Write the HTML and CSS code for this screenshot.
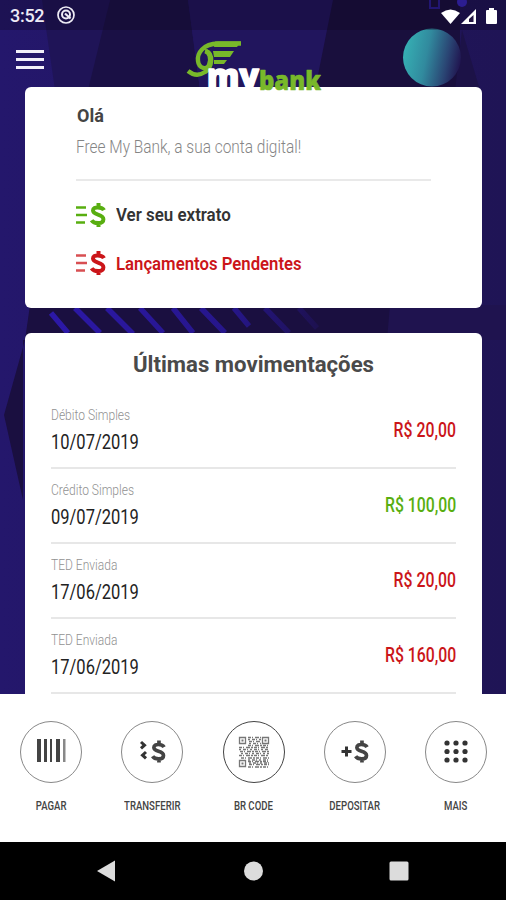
FILE: index.html
```html
<!DOCTYPE html>
<html lang="pt-BR">
<head>
<meta charset="utf-8">
<title>MyBank</title>
<link rel="stylesheet" href="styles.css">
</head>
<body>
<svg class="symbols" width="0" height="0">
  <symbol id="dollar" viewBox="0 0 16 26"><path d="M14 8.200C12.400 5 3 3.800 3 8.600c0 5 10.400 3 10.400 8.600 0 5.400-9.600 4.600-11.800 1M8.500 1v4M8.500 21v4" fill="none" stroke="currentColor" stroke-width="4"/></symbol>
</svg>
<div class="screen">
  <svg class="backdrop" viewBox="0 0 506 694">
    <defs>
      <linearGradient id="base" x1="0" x2="1"><stop offset="0" stop-color="#24176c"/><stop offset="1" stop-color="#1f1455"/></linearGradient>
      <linearGradient id="orb" x1="0" x2="1" y1=".4" y2=".6"><stop offset="0" stop-color="#36b0b4"/><stop offset=".4" stop-color="#318a9e"/><stop offset=".75" stop-color="#2a4674"/><stop offset="1" stop-color="#20134f"/></linearGradient>
      <linearGradient id="fade" gradientUnits="userSpaceOnUse" x1="50" x2="330" y1="0" y2="0"><stop offset="0" stop-color="#2c18a8"/><stop offset=".65" stop-color="#26168a"/><stop offset="1" stop-color="#1c1048"/></linearGradient>
    </defs>
    <rect width="506" height="694" fill="url(#base)"/>
    <path d="M42 0H110L90 90H55Z" fill="#1f1457"/>
    <path d="M110 0H188L200 90H88Z" fill="#1a1045"/>
    <path d="M188 0H333L315 90H200Z" fill="#21155d"/>
    <path d="M333 0H460V90H315Z" fill="#190f3d"/>
    <path d="M462 30L480 90H455Z" fill="#1c1247"/>
    <path d="M30 305H390V340H23V500L4 415L25 340Z" fill="#1a0f40"/>
    <path d="M390 305H506V340H387Z" fill="#1f134f"/>
    <path d="M51 313l17 20M75 308l25 25M107 308l26 26M140 308l23 25M173 308l20 25M201 308l24 25M234 308l15 18M265 308l24 25M299 308l18 20" fill="none" stroke="url(#fade)" stroke-width="5.500"/>
    <rect x="430" y="-3" width="9" height="11" fill="none" stroke="#2c1d98" stroke-width="2"/>
    <circle cx="462" cy="2" r="5" fill="#3a27c4"/>
    <circle cx="432" cy="57.500" r="29" fill="url(#orb)"/>
  </svg>
  <header class="status">
    <span class="clock">3:52</span>
    <svg class="status-app" viewBox="0 0 20 20"><circle cx="10" cy="10" r="8" fill="none" stroke="#eeecf5" stroke-width="1.700"/><circle cx="10" cy="9.500" r="4" fill="none" stroke="#eeecf5" stroke-width="2"/><path d="M9 8.500l5.500 5" stroke="#eeecf5" stroke-width="2.200"/></svg>
    <svg class="status-icons" viewBox="0 0 58 20"><path d="M1 5Q10.500-2 20 5L10.500 16Z" fill="#fff"/><path d="M36 1V16H21Z" fill="#fff"/><path d="M33.500 7V14H29V11Z" fill="#241744"/><path d="M47 2h2V0h5v2h2q1 0 1 1v12q0 1-1 1h-9q-1 0-1-1V3q0-1 1-1Z" fill="#fff"/></svg>
  </header>
  <div class="topbar">
    <div class="menu"><i></i><i></i><i></i></div>
    <svg class="logo" viewBox="0 0 140 56">
      <g fill="none" stroke="#78b82a">
        <path d="M54 4.500H31C16 5 10 14 11 22C12 30 20 31 22 26C25 19 22 13 18 12" stroke-width="4.400"/>
        <path d="M19 12C27 15 25 29 18 33C12 37 6 36 1 32" stroke-width="4.400"/>
      </g>
      <g fill="#78b82a"><path d="M28 2.500H54L50 8H27ZM26 12H47L43 18H27ZM27 21H40L37 25H27Z"/></g>
      <text class="logo-my" x="20" y="49" textLength="52" lengthAdjust="spacingAndGlyphs">my</text>
      <text class="logo-bank" x="72" y="51" textLength="62" lengthAdjust="spacingAndGlyphs">bank</text>
    </svg>
  </div>
  <main class="content">
    <section class="card welcome">
      <h1>Olá</h1>
      <p class="narrow tagline">Free My Bank, a sua conta digital!</p>
      <a class="link"><svg class="lines green" viewBox="0 0 30 26"><path d="M0 5.500H10M0 13H11M0 20.500H9" stroke="currentColor" stroke-width="2.400"/><use href="#dollar" x="14" width="16" height="26"/></svg><span class="narrow statement">Ver seu extrato</span></a>
      <a class="link red"><svg class="lines" viewBox="0 0 30 26"><path d="M0 5.500H10M0 13H11M0 20.500H9" stroke="currentColor" stroke-width="2.400" opacity=".75"/><use href="#dollar" x="14" width="16" height="26"/></svg><span class="narrow pending">Lançamentos Pendentes</span></a>
    </section>
    <section class="card moves">
      <h2>Últimas movimentações</h2>
      <div class="move"><div><p class="narrow kind">Débito Simples</p><p class="narrow date">10/07/2019</p></div><span class="narrow amount red">R$ 20,00</span></div>
      <div class="move"><div><p class="narrow kind">Crédito Simples</p><p class="narrow date">09/07/2019</p></div><span class="narrow amount green">R$ 100,00</span></div>
      <div class="move"><div><p class="narrow kind">TED Enviada</p><p class="narrow date">17/06/2019</p></div><span class="narrow amount red">R$ 20,00</span></div>
      <div class="move"><div><p class="narrow kind">TED Enviada</p><p class="narrow date">17/06/2019</p></div><span class="narrow amount red">R$ 160,00</span></div>
    </section>
  </main>
  <nav class="actions">
    <a class="action"><span class="ring"><svg viewBox="0 0 62 62"><path d="M17 18h4v23h-4zM24 18h3v23h-3zM30 18h2v23h-2zM36 18h4v23h-4z" fill="#444"/><path d="M43 18h2.500v23H43z" fill="#888"/></svg></span><span class="narrow label">PAGAR</span></a>
    <a class="action"><span class="ring"><svg viewBox="0 0 62 62"><path d="M20 21l3.500 3.200-3.500 3.200M25 31l-3.500 3.200 3.500 3.200" fill="none" stroke="#333" stroke-width="3"/><use href="#dollar" x="30" y="18.500" width="15" height="24"/></svg></span><span class="narrow label">TRANSFERIR</span></a>
    <a class="action"><span class="ring dark"><svg viewBox="0 0 62 62"><g fill="none" stroke="#777" stroke-width="1.300"><path d="M16.500 16.500h6v6h-6zM39.500 16.500h6v6h-6zM16.500 39.500h6v6h-6z"/><path d="M18.500 19.500h2M41.500 19.500h2M18.500 42.500h2" stroke-width="2"/><path d="M25 16.500h13M26 20.500h12M25 24.500h21M16 26.500h30M17 30.500h29M16 34.500h30M18 37h28M25 40.500h21M26 43.500h20M25 46h21" stroke-dasharray="3 1 1 2 4 1 2 1"/><path d="M25 18.500h13M26 22.500h12M16 28.500h30M18 32.500h28M25 39h21M26 42h20" stroke-dasharray="2 2 3 1 1 2"/></g></svg></span><span class="narrow label">BR CODE</span></a>
    <a class="action"><span class="ring"><svg viewBox="0 0 62 62"><path d="M17.500 30.500h10M22.500 25.500v10" stroke="#333" stroke-width="3"/><use href="#dollar" x="30" y="18.500" width="15" height="24"/></svg></span><span class="narrow label">DEPOSITAR</span></a>
    <a class="action"><span class="ring"><svg viewBox="0 0 62 62"><g fill="#333"><circle cx="22" cy="22" r="2.600"/><circle cx="31" cy="22" r="2.600"/><circle cx="40" cy="22" r="2.600"/><circle cx="22" cy="30.500" r="2.600"/><circle cx="31" cy="30.500" r="2.600"/><circle cx="40" cy="30.500" r="2.600"/><circle cx="22" cy="39" r="2.600"/><circle cx="31" cy="39" r="2.600"/><circle cx="40" cy="39" r="2.600"/></g></svg></span><span class="narrow label">MAIS</span></a>
  </nav>
  <footer class="system"><svg viewBox="0 0 506 58"><g fill="#dcdcdc"><path d="M97 29L115 18.500V39.500Z"/><circle cx="253.500" cy="29" r="9.500"/><rect x="389.500" y="19.500" width="19" height="19" rx="1.500"/></g></svg></footer>
</div>
</body>
</html>
```

FILE: styles.css
```css
* { box-sizing: border-box; }
body { margin: 0; font-family: Roboto, "Liberation Sans", sans-serif; color: #333; }
h1, h2, p { margin: 0; }
.symbols { position: absolute; }
.screen { position: relative; width: 506px; height: 900px; display: flex; flex-direction: column; overflow: hidden; background: #1f1455; }
.backdrop { position: absolute; top: 0; left: 0; width: 506px; height: 694px; }
.status { position: relative; height: 30px; display: flex; align-items: center; padding: 2px 8px 0 10px; background: rgba(12, 6, 30, .3); }
.clock { width: 46px; font-size: 18px; font-weight: 500; color: #eeecf5; line-height: 28px; letter-spacing: -.3px; }
.status-app { width: 20px; height: 20px; margin-top: -2px; }
.status-icons { width: 58px; height: 20px; margin-left: auto; margin-top: 3px; overflow: visible; }
.topbar { position: relative; z-index: 1; height: 57px; display: flex; justify-content: space-between; }
.menu { display: flex; flex-direction: column; gap: 5px; padding: 20px 0 0 16px; }
.menu i { width: 28px; height: 3px; background: #f2f0fa; }
.logo { width: 140px; height: 56px; flex: none; margin: 9px 179px 0 0; overflow: visible; }
.logo text { stroke-linejoin: round; }
.logo-my { font: 800 33px "Open Sans", "Noto Sans", sans-serif; fill: #fff; stroke: #fff; stroke-width: 1.5px; }
.logo-bank { font: 800 26px "Open Sans", "Noto Sans", sans-serif; fill: #78b82a; stroke: #78b82a; stroke-width: .6px; }
.content { position: relative; height: 607px; padding: 0 24px 0 25px; display: flex; flex-direction: column; gap: 25px; }
.card { background: #fff; border-radius: 6px; }
.welcome { height: 221px; padding: 18px 51px 0; }
.welcome h1 { padding-left: 1px; font-size: 18px; line-height: 21px; font-weight: 700; color: #444; }
.narrow { display: block; white-space: nowrap; width: max-content; transform-origin: 0 50%; }
.tagline { margin-top: 9px; font-size: 18px; line-height: 24px; font-weight: 300; color: #858585; transform: scaleX(.858); }
.link { display: flex; align-items: center; height: 50px; font-size: 18px; font-weight: 600; color: #333; }
.tagline + .link { margin-top: 20px; border-top: 2px solid #e9e9e9; height: 68px; padding-top: 1px; }
.link + .link { height: 30px; margin-top: 1px; }
.lines { width: 30px; height: 26px; margin-right: 10px; }
.statement { transform: scaleX(.94); }
.pending { transform: scaleX(.93); }
.green { color: #58ae10; }
.red, .link.red { color: #cb1519; }
.moves { height: 361px; padding: 17px 26px 0; border-radius: 6px 6px 0 0; }
.moves h2 { text-align: center; font-size: 22.200px; line-height: 28px; font-weight: 700; color: #4a4a4a; margin-bottom: 16px; }
.move { height: 75px; border-bottom: 2px solid #e7e7e7; display: flex; justify-content: space-between; }
.kind { padding-top: 12px; font-size: 14px; line-height: 18px; font-weight: 300; color: #919191; transform: scaleX(.86); }
.date { margin-top: 6px; font-size: 20px; line-height: 24px; font-weight: 450; color: #222; transform: scaleX(.825); }
.amount { padding-top: 24px; font-size: 20px; line-height: 24px; font-weight: 500; transform: scaleX(.79); transform-origin: 100% 50%; }
.actions { position: relative; height: 148px; display: flex; justify-content: space-between; padding: 27px 19px 0 20px; background: #fff; }
.action { width: 62px; display: flex; flex-direction: column; align-items: center; color: #444; }
.ring { width: 62px; height: 62px; border: 1px solid #888; border-radius: 50%; }
.ring.dark { border-color: #444; }
.ring svg { display: block; width: 62px; height: 62px; margin: -1px; }
.label { margin-top: 14px; font-size: 12px; line-height: 18px; font-weight: 500; transform: scaleX(.8); transform-origin: 50% 50%; }
.system { height: 58px; background: #000; }
.system svg { display: block; width: 506px; height: 58px; }
```
